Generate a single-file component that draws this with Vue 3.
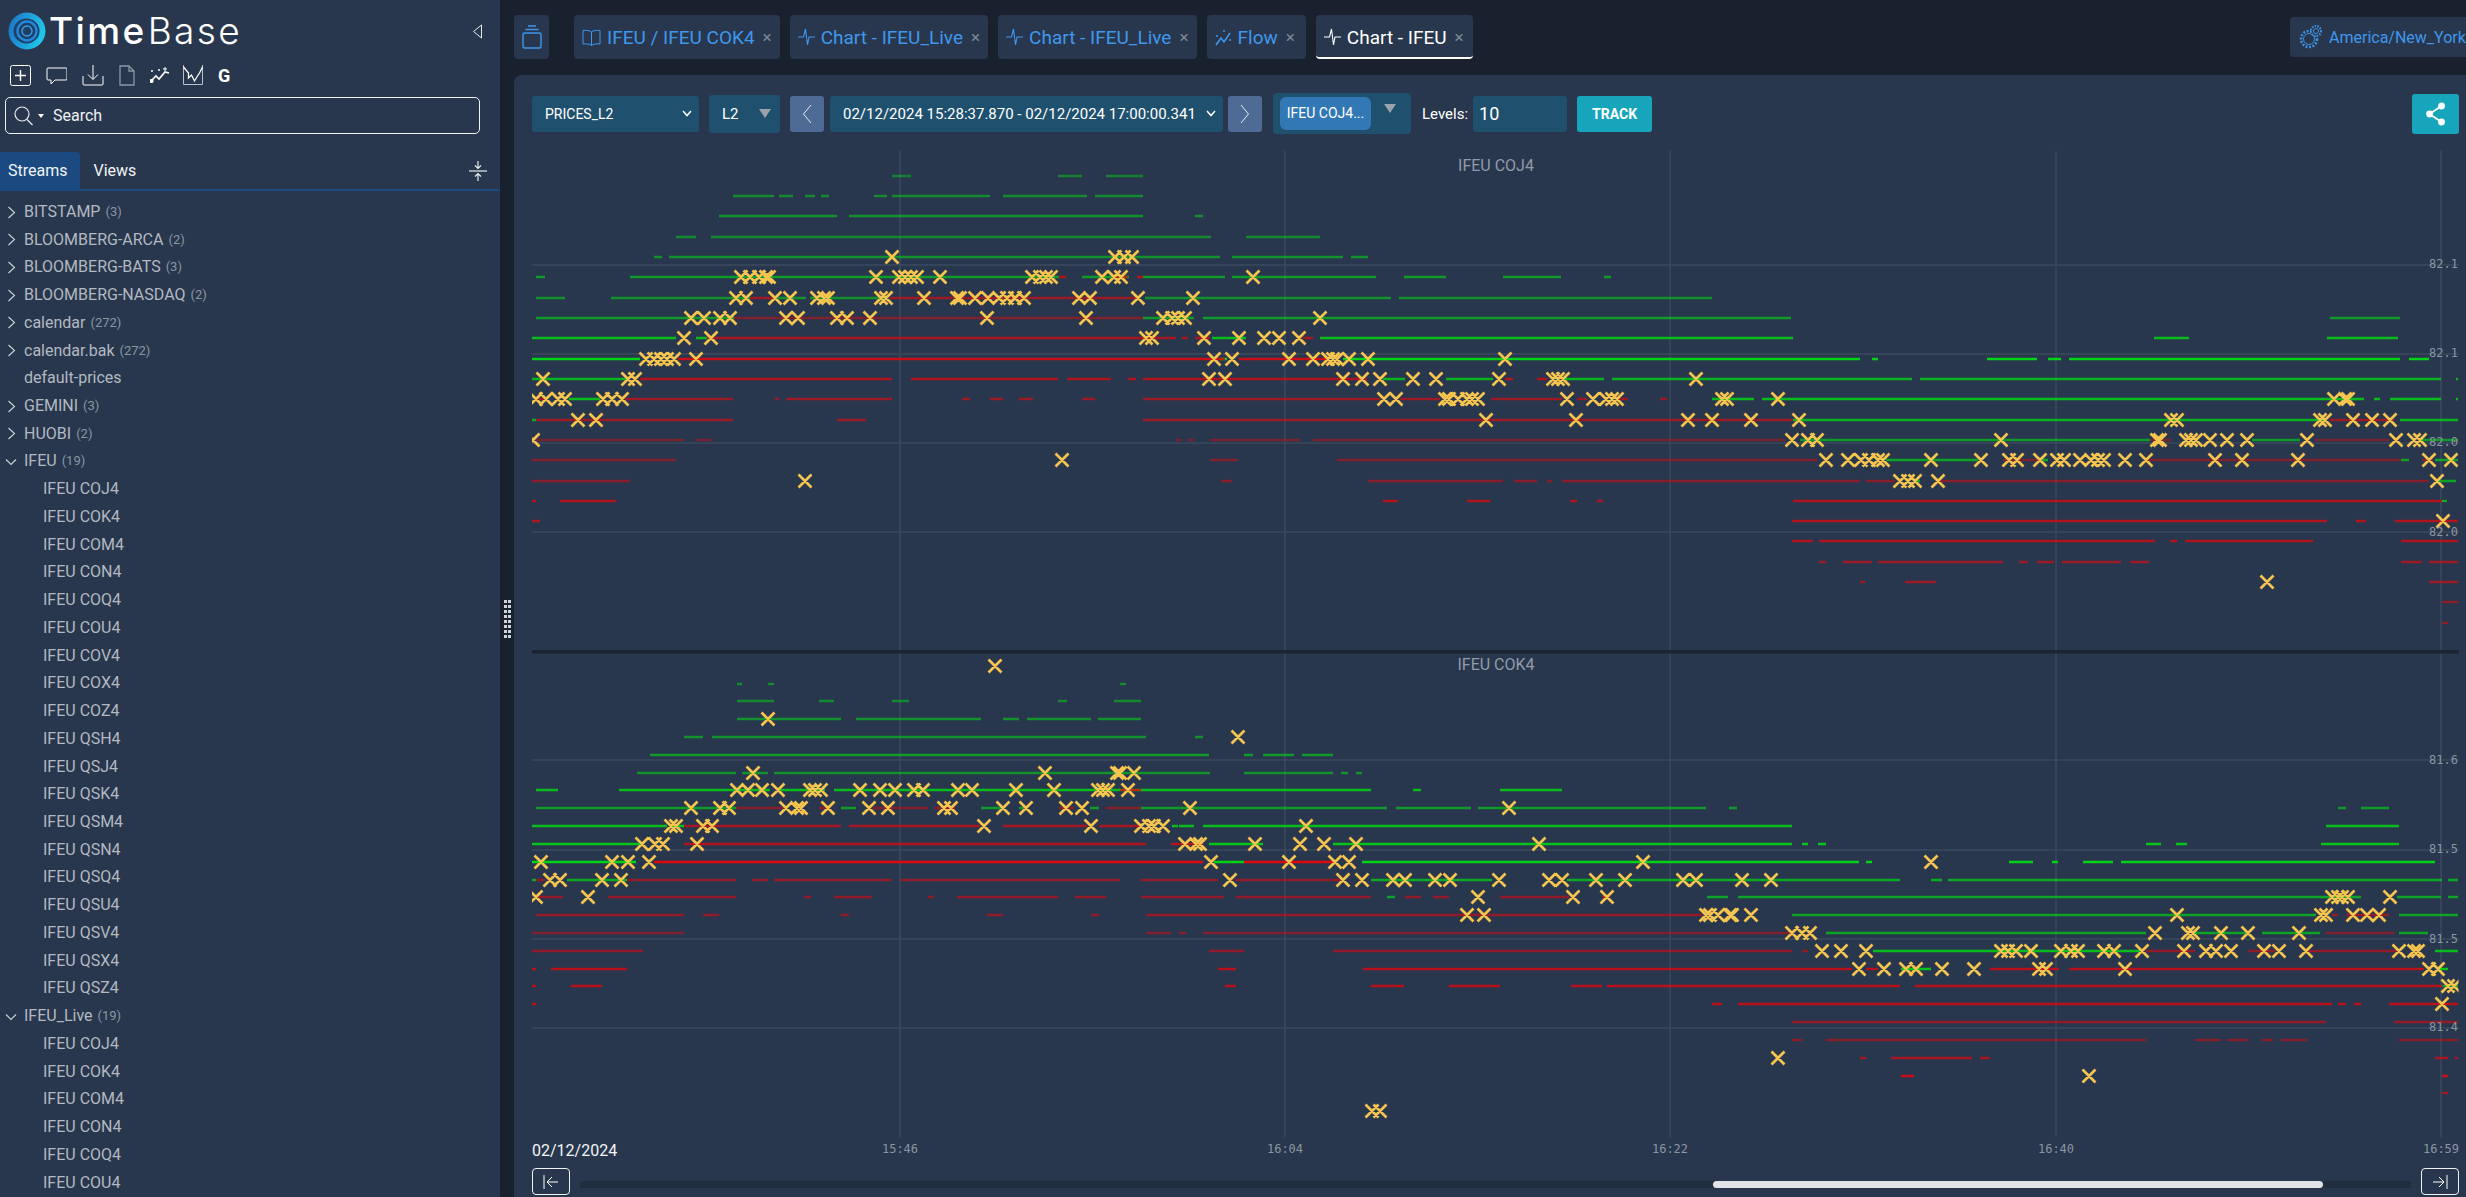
<template>
  <div class="app">
    <aside class="sidebar">
      <div class="brand">
        <svg class="logo" width="38" height="38" viewBox="0 0 38 38">
          <defs>
            <linearGradient id="logoGrad" x1="0" y1="0" x2="1" y2="0.3">
              <stop offset="0" stop-color="#1f6fc4" />
              <stop offset="1" stop-color="#1fc3ea" />
            </linearGradient>
          </defs>
          <circle cx="19" cy="19" r="18.5" fill="url(#logoGrad)" />
          <ellipse cx="18.5" cy="19" rx="13" ry="12.5" fill="#1d3f68" />
          <circle cx="19" cy="19" r="9.5" fill="none" stroke="#2488d8" stroke-width="2.4" />
          <circle cx="19" cy="19" r="5" fill="none" stroke="#3aa0e0" stroke-width="1.4" />
        </svg>
        <div class="wordmark"><span class="time">Time</span><span class="base">Base</span></div>
        <svg class="collapse-arrow" width="11" height="15" viewBox="0 0 11 15">
          <path d="M9.5 1v13L1.5 7.5z" fill="none" stroke="#e6e8ec" stroke-width="1" />
        </svg>
      </div>

      <div class="tools">
        <svg class="tool" width="21" height="21" viewBox="0 0 21 21" fill="none" stroke="#fff">
          <rect x="0.5" y="0.5" width="20" height="20" rx="2" />
          <path d="M10.5 5v11M5 10.5h11" stroke-width="1.4" />
        </svg>
        <svg class="tool" width="21" height="21" viewBox="0 0 21 21" fill="none" stroke="#fff">
          <path d="M2 3h18a1 1 0 0 1 1 1v10a1 1 0 0 1-1 1H9l-4 4v-4H2a1 1 0 0 1-1-1V4a1 1 0 0 1 1-1z" />
        </svg>
        <svg class="tool" width="22" height="22" viewBox="0 0 22 22" fill="none" stroke="#fff">
          <path d="M11 1v14M6 10.5l5 5 5-5" />
          <path d="M1 12v8a1 1 0 0 0 1 1h18a1 1 0 0 0 1-1v-8" />
        </svg>
        <svg class="tool" width="16" height="21" viewBox="0 0 16 21" fill="none" stroke="#8d97a5" stroke-width="1.3">
          <path d="M1 1h9l5 5v14H1zM10 1v5h5" />
        </svg>
        <svg class="tool" width="20" height="16" viewBox="0 0 20 16" fill="none" stroke="#fff" stroke-width="1.6">
          <path d="M1 14l5-5 3 3 6-7 4 1" />
          <circle cx="1.5" cy="14" r="1.3" fill="#fff" />
          <circle cx="2" cy="4" r="1" fill="#fff" stroke="none" />
          <circle cx="9" cy="3" r="1" fill="#fff" stroke="none" />
          <path d="M15 0v4M13 2h4" stroke-width="1" />
        </svg>
        <svg class="tool chart-tool" width="20" height="20" viewBox="0 0 20 20" fill="none" stroke="#fff">
          <path d="M0.5 0v19.5H19.5V0" stroke="#b9c0ca" />
          <path d="M0.5 2l5 6v5l3-3 3 6 3-5 2-3 3-6" stroke-width="1.3" />
        </svg>
        <span class="tool-g">G</span>
      </div>

      <div class="search">
        <svg width="19" height="20" viewBox="0 0 19 20" fill="none" stroke="#e8eaee" stroke-width="1.2">
          <circle cx="8" cy="8" r="7" />
          <path d="M13 13.5l5.5 5.5" />
        </svg>
        <span class="search-caret"></span>
        <span class="search-text">Search</span>
      </div>

      <div class="side-tabs">
        <div class="side-tab active">Streams</div>
        <div class="side-tab">Views</div>
        <svg class="collapse-all" width="18" height="22" viewBox="0 0 18 22" fill="none" stroke="#e8eaee" stroke-width="1.2">
          <path d="M0 11h18" />
          <path d="M9 1v7M6 5.5L9 8.5l3-3M9 21v-7M6 16.5l3-3 3 3" />
        </svg>
      </div>

      <div class="tree">
        <div v-for="row in treeRows" :key="row.id" class="tree-row" :class="{ child: row.child }">
          <svg v-if="row.open === false" class="chev" width="9" height="13" viewBox="0 0 9 13" fill="none" stroke="#cfd4da" stroke-width="1.1">
            <path d="M1.5 1l6 5.5-6 5.5" />
          </svg>
          <svg v-else-if="row.open" class="chev open" width="12" height="8" viewBox="0 0 12 8" fill="none" stroke="#cfd4da" stroke-width="1.1">
            <path d="M1 1.5l5 5 5-5" />
          </svg>
          <span class="tree-name">{{ row.name }}</span>
          <span v-if="row.count" class="tree-count">({{ row.count }})</span>
        </div>
      </div>
    </aside>

    <div class="splitter">
      <div class="grip">
        <i v-for="n in 16" :key="n"></i>
      </div>
    </div>

    <main class="main">
      <div class="tabbar">
        <div class="tab stack-tab">
          <svg width="20" height="24" viewBox="0 0 20 24" fill="none" stroke="#3f97ec" stroke-width="1.4">
            <path d="M6 1h8M3.5 4.5h13" />
            <rect x="1" y="8" width="18" height="15" rx="1.5" />
          </svg>
        </div>
        <div v-for="tab in tabs" :key="tab.id" class="tab" :class="{ current: tab.current, short: tab.icon === 'flow' }">
          <svg v-if="tab.icon === 'book'" width="19" height="17" viewBox="0 0 19 17" fill="none" stroke="currentColor">
            <path d="M9.5 3C8 1.5 4 1 1 1.5V15c3-.5 7 0 8.5 1.5M9.5 3c1.5-1.5 5.500-2 8.500-1.500V15c-3-.5-7 0-8.500 1.500M9.500 3v13.500" />
          </svg>
          <svg v-else-if="tab.icon === 'flow'" width="17" height="19" viewBox="0 0 17 19" fill="none" stroke="currentColor" stroke-width="1.5">
            <path d="M1 17l5-7 3 4 6-9" />
            <circle cx="2" cy="8" r="1" fill="currentColor" stroke="none" />
            <circle cx="9" cy="3" r="1" fill="currentColor" stroke="none" />
            <circle cx="15" cy="12" r="1" fill="currentColor" stroke="none" />
          </svg>
          <svg v-else width="17" height="18" viewBox="0 0 17 18" fill="none" stroke="currentColor" stroke-width="1.1">
            <path d="M0 9h5.500L7.500 1l2 16 1.500-8h6" />
          </svg>
          <span class="tab-title">{{ tab.title }}</span>
          <span class="tab-close">×</span>
        </div>
        <div class="timezone">
          <svg width="26" height="26" viewBox="0 0 26 26" fill="none" stroke="#3f8fdc" stroke-width="1">
            <circle cx="11" cy="15" r="8" stroke-width="2.600" stroke-dasharray="2 1.500" />
            <circle cx="11" cy="15" r="5.500" />
            <circle cx="18" cy="7" r="5" fill="#28374d" stroke-width="2.200" stroke-dasharray="1.500 1.200" />
            <circle cx="18" cy="7" r="2.500" />
          </svg>
          <span class="tz-text">America/New_York</span>
        </div>
      </div>

      <section class="panel">
        <div class="toolbar">
          <div class="control stream-select">
            <span>PRICES_L2</span>
            <svg class="down" width="10" height="7" viewBox="0 0 10 7" fill="none" stroke="#fff" stroke-width="1.500"><path d="M1 1l4 4.500L9 1" /></svg>
          </div>
          <div class="control level-select">
            <span>L2</span>
            <span class="tri"></span>
          </div>
          <button class="nav-btn prev">
            <svg width="10" height="20" viewBox="0 0 10 20" fill="none" stroke="#e8eaee"><path d="M9 1L1.500 10 9 19" /></svg>
          </button>
          <div class="control range">
            <span>02/12/2024 15:28:37.870 - 02/12/2024 17:00:00.341</span>
            <svg class="down" width="10" height="7" viewBox="0 0 10 7" fill="none" stroke="#fff" stroke-width="1.500"><path d="M1 1l4 4.500L9 1" /></svg>
          </div>
          <button class="nav-btn next">
            <svg width="10" height="20" viewBox="0 0 10 20" fill="none" stroke="#e8eaee"><path d="M1 1l7.500 9L1 19" /></svg>
          </button>
          <div class="symbols">
            <span class="chip">IFEU COJ4...</span>
            <span class="tri up"></span>
          </div>
          <span class="levels-label">Levels:</span>
          <div class="control levels-input">10</div>
          <button class="track">TRACK</button>
          <button class="share">
            <svg width="20" height="24" viewBox="0 0 20 24" fill="#fff" stroke="#fff" stroke-width="1.800">
              <path d="M15.500 4L3.500 12l12 8" fill="none" />
              <circle cx="15.500" cy="4" r="2.500" />
              <circle cx="3.500" cy="12" r="2.500" />
              <circle cx="15.500" cy="20" r="2.500" />
            </svg>
          </button>
        </div>

        <svg class="chart" width="1952" height="1025" viewBox="514 140 1952 1025">
          <defs>
            <clipPath id="plotClip">
              <rect x="532" y="140" width="1926.500" height="1000" />
            </clipPath>
          </defs>

          <g stroke="#3a4a5c" stroke-width="1.500">
            <line v-for="y in gridY" :key="'h' + y" x1="532" x2="2459" :y1="y" :y2="y" />
            <line v-for="t in timeTicks" :key="'v' + t.x" :x1="t.x" :x2="t.x" y1="151" y2="1137" />
          </g>

          <g clip-path="url(#plotClip)">
            <g class="plot" fill="none" stroke-width="2.300">
              <template v-for="(row, i) in allRows" :key="i">
                <path v-if="row.green" :d="row.green" stroke="#00dc12" :stroke-opacity="row.ga" />
                <path v-if="row.red" :d="row.red" stroke="#e8060c" :stroke-opacity="row.ra" />
              </template>
              <path :d="crossPath" stroke="#f5c550" stroke-width="2.700" />
            </g>
          </g>

          <rect x="532" y="650" width="1927" height="3.500" rx="1" fill="#1b2432" />

          <text class="chart-title" x="1496" y="171" text-anchor="middle">IFEU COJ4</text>
          <text class="chart-title" x="1496" y="670" text-anchor="middle">IFEU COK4</text>

          <text v-for="l in priceLabels" :key="l.y" class="axis" x="2458" :y="l.y" text-anchor="end">{{ l.text }}</text>
          <text v-for="t in timeTicks" :key="t.text" class="axis" :x="t.x" y="1153" text-anchor="middle">{{ t.text }}</text>
          <text class="axis-date" x="532" y="1156">02/12/2024</text>
        </svg>

        <div class="scroller">
          <button class="jump">
            <svg width="16" height="14" viewBox="0 0 16 14" fill="none" stroke="#fff"><path d="M1 0v14M15 7H4M9 2L4 7l5 5" /></svg>
          </button>
          <div class="track-bar">
            <div class="thumb" :style="{ marginLeft: thumbLeft + 'px', width: thumbWidth + 'px' }"></div>
          </div>
          <button class="jump">
            <svg width="16" height="14" viewBox="0 0 16 14" fill="none" stroke="#fff"><path d="M15 0v14M1 7h11M7 2l5 5-5 5" /></svg>
          </button>
        </div>
      </section>
    </main>
  </div>
</template>

<script setup>
const folder = (name, count) => ({ id: name, name, count, open: false })
const contracts = ['COJ4', 'COK4', 'COM4', 'CON4', 'COQ4', 'COU4', 'COV4', 'COX4', 'COZ4', 'QSH4', 'QSJ4', 'QSK4', 'QSM4', 'QSN4', 'QSQ4', 'QSU4', 'QSV4', 'QSX4', 'QSZ4']

const treeRows = [
  folder('BITSTAMP', 3),
  folder('BLOOMBERG-ARCA', 2),
  folder('BLOOMBERG-BATS', 3),
  folder('BLOOMBERG-NASDAQ', 2),
  folder('calendar', 272),
  folder('calendar.bak', 272),
  { id: 'default-prices', name: 'default-prices' },
  folder('GEMINI', 3),
  folder('HUOBI', 2),
  { id: 'IFEU', name: 'IFEU', count: 19, open: true },
  ...contracts.map((c) => ({ id: 'a' + c, name: 'IFEU ' + c, child: true })),
  { id: 'IFEU_Live', name: 'IFEU_Live', count: 19, open: true },
  ...contracts.slice(0, 6).map((c) => ({ id: 'b' + c, name: 'IFEU ' + c, child: true }))
]

const tabs = [
  { id: 1, icon: 'book', title: 'IFEU / IFEU COK4' },
  { id: 2, icon: 'pulse', title: 'Chart - IFEU_Live' },
  { id: 3, icon: 'pulse', title: 'Chart - IFEU_Live' },
  { id: 4, icon: 'flow', title: 'Flow' },
  { id: 5, icon: 'pulse', title: 'Chart - IFEU', current: true }
]

const gridY = [265, 354, 443, 532, 760, 850, 939, 1028]
const priceLabels = [
  { y: 268, text: '82.1' }, { y: 357, text: '82.1' }, { y: 446, text: '82.0' }, { y: 536, text: '82.0' },
  { y: 764, text: '81.6' }, { y: 853, text: '81.5' }, { y: 943, text: '81.5' }, { y: 1031, text: '81.4' }
]
const timeTicks = [
  { x: 900, text: '15:46' }, { x: 1285, text: '16:04' }, { x: 1670, text: '16:22' },
  { x: 2056, text: '16:40' }, { x: 2441, text: '16:59' }
]

// order book levels: [green alpha, red alpha, green spans, red spans, trades]
const topBook = [
  [0.45, 0, '892-911 1058-1082 1106-1143', '', ''],
  [0.5, 0, '733-774 779-793 805-815 821-829 874-887 892-990 1003-1087 1095-1143', '', ''],
  [0.55, 0, '719-837 849-1143 1195-1203', '', ''],
  [0.5, 0, '676-696 711-1211 1246-1320', '', ''],
  [0.55, 0, '654-662 669-1220 1232-1343 1351-1368', '', '892 1115 1124 1132'],
  [0.6, 0.7, '536-545 630-1059 1082-1129 1143-1225 1232-1376 1404-1446 1503-1561 1604-1611', '1059-1066 1115-1128 1137-1143', '741 750 759 766 769 876 899 905 911 917 940 1032 1040 1046 1051 1102 1114 1121 1253'],
  [0.55, 0.6, '536-565 611-750 775-806 810-886 1000-1003 1145-1391 1399-1712', '750-775 890-1138', '736 746 775 790 817 824 828 881 886 924 957 960 975 988 999 1007 1015 1024 1079 1090 1138 1193'],
  [0.6, 0.45, '536-734 1143-1194 1203-1791 2330-2400', '734-1143', '691 704 720 730 786 798 837 847 870 987 1086 1163 1172 1178 1185 1320'],
  [0.8, 0.65, '532-676 696-707 1212-1246 1320-1793 2154-2189 2327-2398', '707-1176 1182-1188 1195-1210 1303-1313', '684 711 1146 1152 1204 1239 1264 1279 1299'],
  [0.95, 0.85, '532-640 1220-1227 1343-1860 1872-1878 1987-2037 2048-2061 2069-2400 2409-2429', '678-1225 1239-1327', '646 654 661 667 674 696 1214 1232 1289 1313 1328 1333 1337 1349 1368 1505'],
  [0.75, 0.7, '532-627 1383-1405 1446-1493 1563-1604 1612-1912 1920-2441 2456-2458', '640-892 911-1058 1067-1111 1128-1136 1143-1367 1505-1513 1537-1547', '543 628 635 1209 1225 1343 1362 1380 1413 1436 1499 1553 1558 1563 1696'],
  [0.8, 0.6, '569-600 1712-1754 1762-2364 2374-2380 2390-2441 2456-2458', '536-546 625-733 775-779 786-892 962-970 990-1003 1019-1033 1082-1095 1143-1380 1400-1440 1491-1562 1577-1587 1617-1628 1660-1667', '536 546 558 565 603 612 622 1384 1396 1445 1449 1458 1467 1472 1478 1567 1593 1606 1612 1617 1722 1727 1778 2334 2345 2348'],
  [0.75, 0.6, '532-536 1793-2325 2400-2458', '536-733 837-866 1143-1793 2330-2394', '578 596 1486 1576 1688 1712 1751 1799 2171 2177 2320 2325 2353 2372 2390'],
  [0.6, 0.42, '1800-2150 2252-2300 2420-2458', '536-684 696-711 1176-1182 1188-1194 1210-1300 1313-1785 2150-2171 2315-2389', '533 1792 1808 1817 2001 2157 2160 2186 2191 2196 2210 2227 2247 2307 2396 2414 2420'],
  [0.65, 0.45, '1886-1978 2042-2048 2401-2409 2435-2458', '532-676 1210-1238 1337-1817 2003-2042 2145-2401 2422-2433', '1062 1826 1848 1861 1869 1878 1883 1931 1981 2009 2017 2040 2057 2064 2080 2091 2098 2104 2125 2146 2215 2242 2298 2429 2451'],
  [0.65, 0.5, '1915-1920 2438-2456', '532-630 1221-1232 1368-1503 1514-1537 1547-1552 1562-1860 1866-1895 1939-2428', '805 1900 1908 1915 1938 2437'],
  [0.75, 0.7, '2442-2447', '532-536 560-616 1383-1398 1467-1490 1570-1577 1597-1603 1793-2442', ''],
  [0, 0.7, '', '532-540 1792-2327 2356-2366 2395-2458', '2443'],
  [0, 0.7, '', '1792-1813 1819-2155 2170-2177 2185-2313 2401-2458', ''],
  [0, 0.6, '', '1819-1826 1843-1872 1878-2003 2019-2028 2037-2054 2062-2121 2130-2149 2401-2422 2429-2458', ''],
  [0, 0.6, '', '1860-1865 1905-1936 2429-2458', '2267'],
  [0, 0.55, '', '2442-2458', ''],
  [0, 0.55, '', '2442-2448', '']
]

const bottomBook = [
  [0, 0, '', '', '995'],
  [0.5, 0, '737-742 768-774 1120-1126', '', ''],
  [0.5, 0, '737-774 819-834 892-909 1058-1067 1114-1141', '', ''],
  [0.55, 0, '737-841 856-981 1003-1019 1027-1091 1098-1141', '', '768'],
  [0.55, 0, '684-703 712-1146 1195-1203', '', '1238'],
  [0.6, 0, '650-1209 1244-1253 1263-1294 1302-1333', '', ''],
  [0.55, 0, '637-736 742-768 774-1210 1244-1333 1341-1348 1356-1362', '', '753 1045 1117 1120 1134'],
  [0.8, 0.8, '536-558 619-770 778-825 834-1145 1225-1300 1141-1225 1236-1371 1413-1421 1500-1562', '1120-1141', '737 748 762 778 810 815 821 860 880 895 914 923 958 972 1016 1054 1098 1103 1108 1128'],
  [0.6, 0.5, '536-736 841-856 981-1002 1019-1024 1090-1099 1141-1387 1396-1471 1478-1706 1729-1737 2338-2346 2361-2389', '736-783 819-828 873-928 934-955 1059-1074 1106-1141', '691 720 729 786 797 801 828 869 888 944 951 1003 1026 1066 1082 1190 1509'],
  [0.8, 0.65, '532-667 671-684 1172-1178 1179-1194 1203-1792 2326-2399', '684-841 849-980 1003-1087 1099-1141', '671 676 703 712 984 1091 1141 1149 1154 1163 1306'],
  [0.85, 0.7, '532-640 1209-1263 1333-1792 1802-1808 1818-1826 2146-2161 2176-2187 2321-2399', '684-1146 1171-1203', '642 655 663 697 1185 1196 1200 1255 1300 1324 1356 1539'],
  [0.95, 0.95, '532-636 1214-1244 1362-1859 1866-1872 2009-2033 2052-2058 2083-2113 2121-2435', '654-1203 1244-1335', '541 612 628 649 1211 1289 1335 1349 1643 1931'],
  [0.7, 0.55, '532-536 567-627 1371-1492 1567-1900 1931-1942 1948-2442 2448-2458', '536-545 627-736 752-768 774-892 901-1120 1141-1218 1235-1341', '550 560 602 621 1230 1343 1362 1393 1405 1435 1450 1499 1549 1562 1596 1625 1683 1696 1742 1771'],
  [0.65, 0.55, '1387-1395 1707-1728 1738-2361 2397-2441 2448-2458', '536-563 608-736 804-811 834-872 928-934 957-1058 1075-1106 1141-1224 1236-1371 1405-1421 1433-1449 1500-1569 1602-1610', '536 588 1478 1573 1607 2332 2338 2342 2348 2390'],
  [0.65, 0.55, '1792-2316 2399-2458', '536-684 703-719 841-849 987-1003 1091-1099 1146-1702 2332-2338 2346-2389', '1467 1484 1706 1710 1718 1730 1732 1751 2177 2321 2326 2353 2367 2379'],
  [0.65, 0.45, '1826-2146 2193-2248 2262-2320 2399-2428', '532-684 1146-1171 1179-1186 1203-1792 2326-2394', '1792 1802 1810 2155 2188 2193 2221 2248 2299'],
  [0.8, 0.55, '1873-2140 2435-2458', '532-643 1209-1244 1333-1792 1802-1808 2146-2195 2248-2275 2308-2397', '1822 1841 1866 2001 2008 2016 2031 2061 2071 2078 2104 2114 2142 2184 2206 2216 2231 2264 2279 2306 2399 2414 2418'],
  [0.85, 0.75, '1901-1931 2438-2448', '532-536 551-627 1218-1236 1363-1852 1866-1878 1990-2059 2069-2424', '1859 1884 1906 1916 1942 1974 2039 2046 2125 2429 2438'],
  [0.6, 0.75, '2442-2458', '532-536 571-602 1225-1236 1371-1404 1449-1500 1571-1602 1607-1900 1915-2442', '2448 2454'],
  [0, 0.75, '', '532-536 1712-1722 1738-2332 2338-2346 2354-2361 2389-2458', '2442'],
  [0, 0.55, '', '1792-2326 2394-2458', ''],
  [0, 0.5, '', '1792-1802 1826-2146 2195-2221 2227-2248 2262-2273 2281-2307 2399-2458', ''],
  [0, 0.65, '', '1860-1866 1891-1972 1980-1990 2435-2448 2455-2458', '1778'],
  [0, 0.85, '', '1901-1914 2442-2448', '2089'],
  [0, 0.65, '', '2442-2448', ''],
  [0, 0, '', '', '1372 1380']
]

const spans = (text, y) => text
  .split(' ')
  .filter(Boolean)
  .map((s) => {
    const [a, b] = s.split('-')
    return `M${a} ${y}H${b}`
  })
  .join('')

const toRows = (book, startY, step) => book.map((r, i) => {
  const y = Math.round(startY + i * step)
  return { y, ga: r[0], ra: r[1], green: spans(r[2], y), red: spans(r[3], y), crosses: r[4] }
})

const allRows = [...toRows(topBook, 175.7, 20.32), ...toRows(bottomBook, 665.7, 17.82)]

const crossPath = allRows
  .filter((r) => r.crosses)
  .map((r) => r.crosses.split(' ').map((x) => {
    const n = Number(x)
    return `M${n - 6.5} ${r.y - 6.5}L${n + 6.5} ${r.y + 6.5}M${n + 6.5} ${r.y - 6.5}L${n - 6.5} ${r.y + 6.5}`
  }).join(''))
  .join('')

const thumbLeft = 1133
const thumbWidth = 610
</script>

<style>
html, body {
  margin: 0;
  background: #1a212e;
}
</style>

<style scoped>
.app {
  display: flex;
  width: 2466px;
  height: 1197px;
  overflow: hidden;
  background: #1a212e;
  font-family: Roboto, "Liberation Sans", sans-serif;
  color: #fff;
}

.sidebar {
  width: 500px;
  flex: none;
  background: #28374d;
  display: flex;
  flex-direction: column;
  overflow: hidden;
}

.brand {
  height: 60px;
  display: flex;
  align-items: center;
  padding-left: 8px;
  box-sizing: border-box;
  padding-top: 2px;
}

.wordmark {
  margin-left: 3px;
  font-family: Inter, "Liberation Sans", sans-serif;
  font-size: 37px;
  line-height: 40px;
  color: #fff;
  letter-spacing: 2.4px;
  white-space: nowrap;
}

.time {
  font-weight: 500;
}

.base {
  font-weight: 300;
  margin-left: 1px;
}

.collapse-arrow {
  margin-left: auto;
  margin-right: 17px;
}

.tools {
  height: 26px;
  margin-top: 2px;
  display: flex;
  align-items: center;
  padding-left: 10px;
}

.tool {
  flex: none;
  margin-right: 15px;
}

.chart-tool {
  margin-left: -2px;
}

.tool-g {
  font-size: 18px;
  font-weight: 700;
}

.search {
  margin: 9px 20px 0 5px;
  height: 35px;
  border: 1.5px solid #f0f2f4;
  border-radius: 5px;
  display: flex;
  align-items: center;
  padding-left: 8px;
}

.search-caret {
  margin-left: 5px;
  border-left: 3.5px solid transparent;
  border-right: 3.5px solid transparent;
  border-top: 4px solid #fff;
}

.search-text {
  margin-left: 9px;
  font-size: 16px;
  color: #f0f2f4;
}

.side-tabs {
  margin-top: 18px;
  height: 37px;
  border-bottom: 2px solid #1a4a80;
  display: flex;
  align-items: stretch;
  position: relative;
}

.side-tab {
  font-size: 16px;
  line-height: 37px;
  padding: 0 12px 0 8px;
  color: #f2f4f6;
}

.side-tab.active {
  background: #1a4a80;
  border-top-right-radius: 4px;
  padding-right: 13px;
}

.side-tab:not(.active) {
  padding-left: 13px;
}

.collapse-all {
  margin-left: auto;
  margin-right: 13px;
  align-self: center;
}

.tree {
  margin-top: 6.5px;
  flex: 1;
}

.tree-row {
  height: 27.74px;
  display: flex;
  align-items: center;
  padding-left: 24px;
  position: relative;
  font-size: 16px;
  color: #b3b9c2;
  white-space: nowrap;
}

.tree-row.child {
  padding-left: 43px;
}

.chev {
  position: absolute;
  left: 7px;
  top: 8px;
}

.chev.open {
  left: 5px;
  top: 11px;
}

.tree-count {
  margin-left: 5px;
  font-size: 13px;
  color: #8b95a3;
}

.splitter {
  width: 14px;
  flex: none;
  position: relative;
}

.grip {
  position: absolute;
  left: 4px;
  top: 600px;
  display: grid;
  grid-template-columns: 3px 3px;
  gap: 2px 1px;
}

.grip i {
  width: 3px;
  height: 3px;
  background: #cfd4da;
}

.main {
  flex: 1;
  min-width: 0;
  display: flex;
  flex-direction: column;
}

.tabbar {
  height: 75px;
  flex: none;
  display: flex;
  align-items: flex-start;
  padding-top: 15px;
  box-sizing: border-box;
  gap: 10px;
  position: relative;
}

.tab {
  height: 44px;
  box-sizing: border-box;
  background: #28374d;
  border-radius: 4px;
  display: flex;
  align-items: center;
  padding: 0 8px;
  gap: 6px;
  color: #3f97ec;
  font-size: 19px;
  white-space: nowrap;
}

.tab.short {
  padding-right: 11px;
}

.stack-tab {
  width: 35px;
  padding: 0;
  justify-content: center;
  margin-right: 15px;
}

.tab.current {
  color: #fff;
  border-bottom: 2px solid #fff;
  padding-top: 2px;
  padding-right: 9px;
}

.tab-close {
  color: #7b8796;
  font-size: 17px;
  margin-left: 2px;
}

.timezone {
  position: absolute;
  left: 1776px;
  top: 17px;
  width: 176px;
  height: 40px;
  background: #28374d;
  border-radius: 4px 0 0 4px;
  display: flex;
  align-items: center;
  padding-left: 8px;
  box-sizing: border-box;
  gap: 5px;
  overflow: hidden;
}

.tz-text {
  color: #3f97ec;
  font-size: 16px;
  white-space: nowrap;
}

.panel {
  flex: 1;
  min-height: 0;
  background: #28374d;
  border-top-left-radius: 8px;
  padding-top: 18px;
  box-sizing: border-box;
}

.toolbar {
  height: 41px;
  display: flex;
  align-items: center;
  padding-left: 18px;
  padding-right: 7px;
  font-size: 14px;
}

.control {
  height: 36px;
  box-sizing: border-box;
  background: #1f506e;
  border-radius: 3px;
  display: flex;
  align-items: center;
  padding-left: 13px;
  position: relative;
  white-space: nowrap;
}

.down {
  margin-left: auto;
  margin-right: 7px;
}

.stream-select {
  width: 167px;
}

.level-select {
  width: 71px;
  height: 38px;
  margin-left: 10px;
  font-size: 15px;
}

.tri {
  border-left: 6px solid transparent;
  border-right: 6px solid transparent;
  border-top: 9px solid #9aa3ad;
  margin-left: auto;
  margin-right: 9px;
}

.nav-btn {
  height: 36px;
  width: 34px;
  padding: 0;
  border: 0;
  background: #4d6b95;
  border-radius: 3px;
  display: flex;
  align-items: center;
  justify-content: center;
}

.prev {
  margin-left: 10px;
}

.next {
  margin-left: 5px;
}

.range {
  width: 393px;
  margin-left: 6px;
  font-size: 15px;
}

.symbols {
  width: 138px;
  height: 41px;
  margin-left: 11px;
  background: #1f506e;
  border-radius: 4px;
  display: flex;
  align-items: flex-start;
  padding: 4px 0 0 7px;
  box-sizing: border-box;
  position: relative;
}

.chip {
  width: 91px;
  height: 33px;
  background: #3278b5;
  border-radius: 6px;
  font-size: 14px;
  line-height: 33px;
  text-align: center;
}

.symbols .tri {
  margin: 7px 0 0 13px;
}

.levels-label {
  margin-left: 11px;
  font-size: 15px;
}

.levels-input {
  width: 94px;
  margin-left: 5px;
  font-size: 18px;
  padding-left: 6px;
}

.track {
  width: 75px;
  height: 36px;
  margin-left: 10px;
  border: 0;
  border-radius: 3px;
  background: #17a5bb;
  color: #fff;
  font-family: inherit;
  font-size: 14px;
  font-weight: 700;
  padding: 0;
}

.share {
  width: 47px;
  height: 40px;
  margin-left: auto;
  border: 0;
  border-radius: 3px;
  background: #17a5bb;
  padding: 0;
  display: flex;
  align-items: center;
  justify-content: center;
}

.chart {
  display: block;
  margin-top: 6px;
}

.plot {
  filter: blur(0.4px);
}

.chart-title {
  font-family: Roboto, "Liberation Sans", sans-serif;
  font-size: 16px;
  fill: #929ba8;
}

.axis {
  font-family: "DejaVu Sans Mono", monospace;
  font-size: 12px;
  fill: #8b95a2;
}

.axis-date {
  font-family: Roboto, "Liberation Sans", sans-serif;
  font-size: 16px;
  fill: #f2f4f6;
}

.scroller {
  margin-top: 3px;
  height: 27px;
  display: flex;
  align-items: flex-start;
  padding-left: 18px;
  padding-right: 7px;
}

.jump {
  width: 38px;
  height: 27px;
  box-sizing: border-box;
  border: 1px solid #f0f2f4;
  border-radius: 4px;
  background: transparent;
  padding: 0;
  display: flex;
  align-items: center;
  justify-content: center;
  flex: none;
}

.track-bar {
  width: 1831px;
  height: 7px;
  margin: 13px 10px 0;
  background: #212e40;
}

.thumb {
  height: 7px;
  background: #e1e3e6;
  border-radius: 4px;
}
</style>
